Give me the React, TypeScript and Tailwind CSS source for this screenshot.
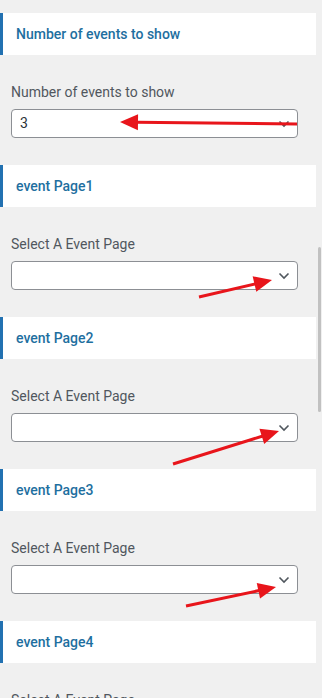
import React from "react";

const Chevron = () => (
  <svg width="12" height="8" viewBox="0 0 12 8" className="shrink-0">
    <path d="M1.5 1.5 L6 6 L10.5 1.5" fill="none" stroke="#50575e" strokeWidth="1.6" />
  </svg>
);

const Header = ({ title }: { title: string }) => (
  <div className="mr-[6px] h-[42px] bg-white border-l-[3px] border-[#2271b1] flex items-center pl-[13px]">
    <span className="text-[14px] font-medium text-[#1e6fa0]">{title}</span>
  </div>
);

const Field = ({ label, value }: { label: string; value?: string }) => (
  <div className="pl-[11px] pt-[27px] pb-[27px]">
    <div className="text-[14px] leading-[20px] text-[#50575e] mb-[7px]">{label}</div>
    <div className="w-[287px] h-[29px] bg-white border border-[#8c8f94] rounded-[4px] flex items-center justify-between pl-[8px] pr-[7px]">
      <span className="text-[14px] text-[#2c3338]">{value ?? ""}</span>
      <Chevron />
    </div>
  </div>
);

const Arrow = ({ x1, y1, x2, y2 }: { x1: number; y1: number; x2: number; y2: number }) => {
  const dx = x2 - x1;
  const dy = y2 - y1;
  const len = Math.sqrt(dx * dx + dy * dy);
  const ux = dx / len;
  const uy = dy / len;
  const hl = 18;
  const hw = 8;
  const bx = x2 - ux * hl;
  const by = y2 - uy * hl;
  const px = -uy;
  const py = ux;
  return (
    <g>
      <line x1={x1} y1={y1} x2={bx + ux * 2} y2={by + uy * 2} stroke="#e8151b" strokeWidth="3" />
      <polygon
        points={`${x2},${y2} ${bx + px * hw},${by + py * hw} ${bx - px * hw},${by - py * hw}`}
        fill="#e8151b"
      />
    </g>
  );
};

export default function App() {
  return (
    <div
      className="relative w-[322px] h-[698px] overflow-hidden bg-[#f0f0f0]"
      style={{ fontFamily: "Roboto, 'Noto Sans', Arial, sans-serif" }}
    >
      <div className="pt-[13px]">
        <Header title="Number of events to show" />
        <Field label="Number of events to show" value="3" />
        <Header title="event Page1" />
        <Field label="Select A Event Page" />
        <Header title="event Page2" />
        <Field label="Select A Event Page" />
        <Header title="event Page3" />
        <Field label="Select A Event Page" />
        <Header title="event Page4" />
        <Field label="Select A Event Page" />
      </div>
      <div className="absolute right-[1px] top-[247px] w-[3px] h-[165px] bg-[#c1c1c1] rounded-full" />
      <svg className="absolute left-0 top-0 pointer-events-none" width="322" height="698">
        <Arrow x1={297} y1={124} x2={120} y2={122} />
        <Arrow x1={199} y1={297} x2={272} y2={280} />
        <Arrow x1={173} y1={464} x2={279} y2={431} />
        <Arrow x1={186} y1={606} x2={276} y2={587} />
      </svg>
    </div>
  );
}
